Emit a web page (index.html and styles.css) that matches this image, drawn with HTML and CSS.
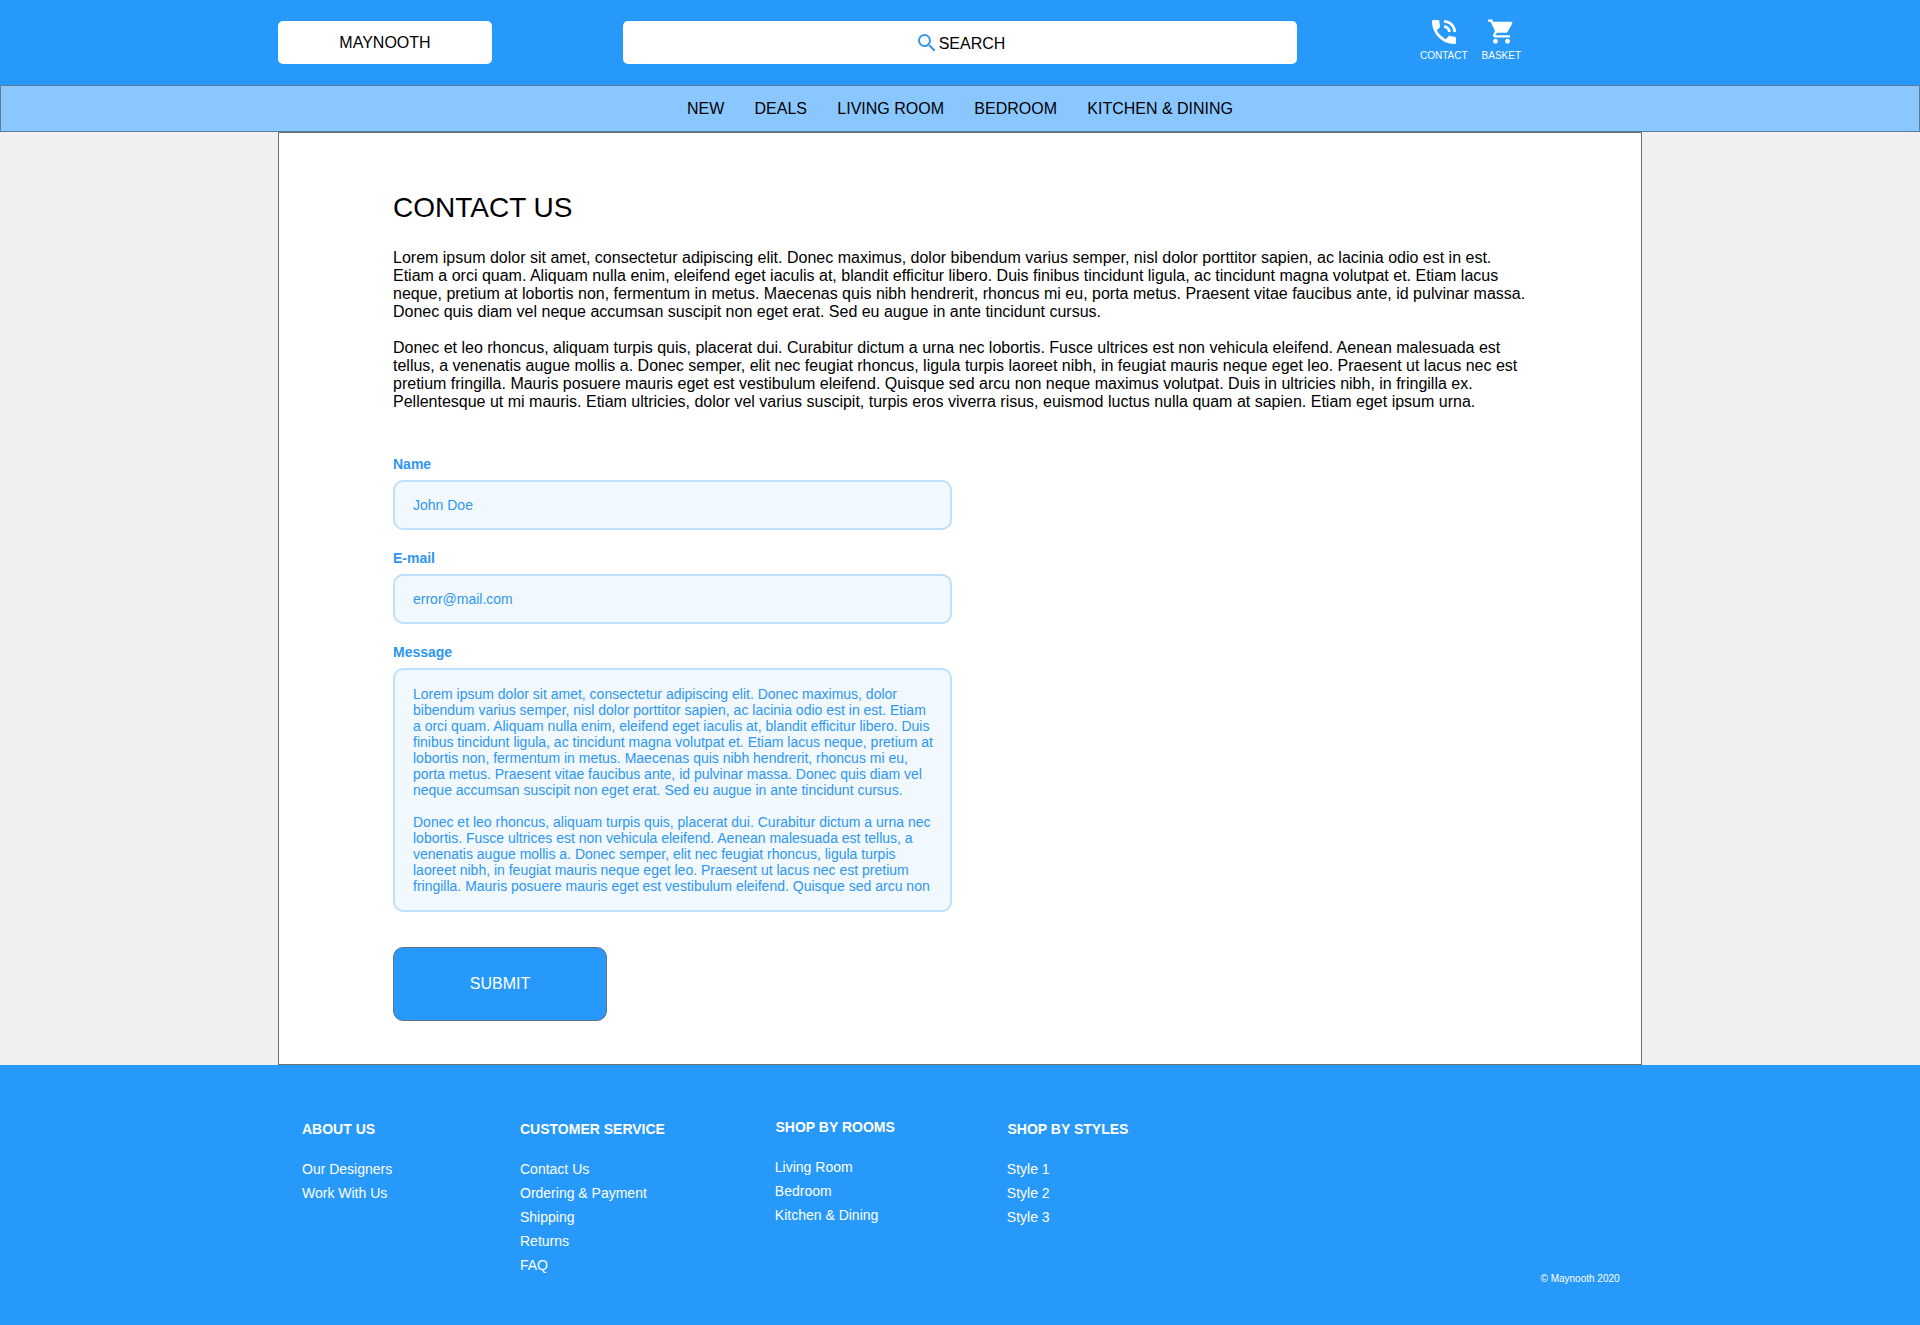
FILE: index.html
```html
<!DOCTYPE html>
<html lang="en">
<head>
<meta charset="utf-8">
<title>Maynooth - Contact Us</title>
<link rel="stylesheet" href="styles.css">
</head>
<body>
<header class="header">
  <a class="logo">MAYNOOTH</a>
  <div class="search">
    <svg width="24" height="24" viewBox="0 0 24 24"><path d="M15.5 14h-.79l-.28-.27A6.471 6.471 0 0 0 16 9.5 6.5 6.5 0 1 0 9.5 16c1.61 0 3.09-.59 4.23-1.57l.27.28v.79l5 4.99L20.49 19l-4.99-5zm-6 0C7.01 14 5 11.99 5 9.5S7.01 5 9.5 5 14 7.01 14 9.5 11.99 14 9.5 14z"/></svg>
    <span>SEARCH</span>
  </div>
  <div class="actions">
    <a class="action">
      <span class="action-icon"><svg width="32" height="32" viewBox="0 0 24 24"><path d="M20 15.5c-1.25 0-2.45-.2-3.57-.57a1.02 1.02 0 0 0-1.02.24l-2.2 2.2a15.045 15.045 0 0 1-6.59-6.59l2.2-2.21c.28-.26.36-.65.25-1C8.7 6.45 8.5 5.25 8.5 4c0-.55-.45-1-1-1H4c-.55 0-1 .45-1 1 0 9.39 7.61 17 17 17 .55 0 1-.45 1-1v-3.5c0-.55-.45-1-1-1zM19 12h2a9 9 0 0 0-9-9v2c3.87 0 7 3.13 7 7zm-4 0h2c0-2.76-2.24-5-5-5v2c1.66 0 3 1.34 3 3z"/></svg></span>
      <span>CONTACT</span>
    </a>
    <a class="action">
      <span class="action-icon"><svg width="29" height="29" viewBox="0 0 24 24"><path d="M7 18c-1.1 0-1.99.9-1.99 2S5.9 22 7 22s2-.9 2-2-.9-2-2-2zM1 2v2h2l3.6 7.59-1.35 2.45c-.16.28-.25.61-.25.96 0 1.1.9 2 2 2h12v-2H7.42c-.14 0-.25-.11-.25-.25l.03-.12.9-1.63h7.45c.75 0 1.41-.41 1.75-1.03l3.58-6.49A1 1 0 0 0 20 4H5.21l-.94-2H1zm16 16c-1.1 0-1.99.9-1.99 2s.89 2 1.99 2 2-.9 2-2-.9-2-2-2z"/></svg></span>
      <span>BASKET</span>
    </a>
  </div>
</header>
<nav class="nav">
  <a>NEW</a><a>DEALS</a><a>LIVING ROOM</a><a>BEDROOM</a><a>KITCHEN &amp; DINING</a>
</nav>
<main class="main">
  <h1 class="title">CONTACT US</h1>
  <p class="copy">Lorem ipsum dolor sit amet, consectetur adipiscing elit. Donec maximus, dolor bibendum varius semper, nisl dolor porttitor sapien, ac lacinia odio est in est.<br>Etiam a orci quam. Aliquam nulla enim, eleifend eget iaculis at, blandit efficitur libero. Duis finibus tincidunt ligula, ac tincidunt magna volutpat et. Etiam lacus<br>neque, pretium at lobortis non, fermentum in metus. Maecenas quis nibh hendrerit, rhoncus mi eu, porta metus. Praesent vitae faucibus ante, id pulvinar massa.<br>Donec quis diam vel neque accumsan suscipit non eget erat. Sed eu augue in ante tincidunt cursus.</p>
  <p class="copy">Donec et leo rhoncus, aliquam turpis quis, placerat dui. Curabitur dictum a urna nec lobortis. Fusce ultrices est non vehicula eleifend. Aenean malesuada est<br>tellus, a venenatis augue mollis a. Donec semper, elit nec feugiat rhoncus, ligula turpis laoreet nibh, in feugiat mauris neque eget leo. Praesent ut lacus nec est<br>pretium fringilla. Mauris posuere mauris eget est vestibulum eleifend. Quisque sed arcu non neque maximus volutpat. Duis in ultricies nibh, in fringilla ex.<br>Pellentesque ut mi mauris. Etiam ultricies, dolor vel varius suscipit, turpis eros viverra risus, euismod luctus nulla quam at sapien. Etiam eget ipsum urna.</p>
  <form class="form">
    <label class="label" for="name">Name</label>
    <input class="field" id="name" type="text" value="John Doe">
    <label class="label" for="email">E-mail</label>
    <input class="field" id="email" type="text" value="error@mail.com">
    <label class="label" for="message">Message</label>
    <textarea class="field message" id="message" spellcheck="false">Lorem ipsum dolor sit amet, consectetur adipiscing elit. Donec maximus, dolor
bibendum varius semper, nisl dolor porttitor sapien, ac lacinia odio est in est. Etiam
a orci quam. Aliquam nulla enim, eleifend eget iaculis at, blandit efficitur libero. Duis
finibus tincidunt ligula, ac tincidunt magna volutpat et. Etiam lacus neque, pretium at
lobortis non, fermentum in metus. Maecenas quis nibh hendrerit, rhoncus mi eu,
porta metus. Praesent vitae faucibus ante, id pulvinar massa. Donec quis diam vel
neque accumsan suscipit non eget erat. Sed eu augue in ante tincidunt cursus.

Donec et leo rhoncus, aliquam turpis quis, placerat dui. Curabitur dictum a urna nec
lobortis. Fusce ultrices est non vehicula eleifend. Aenean malesuada est tellus, a
venenatis augue mollis a. Donec semper, elit nec feugiat rhoncus, ligula turpis
laoreet nibh, in feugiat mauris neque eget leo. Praesent ut lacus nec est pretium
fringilla. Mauris posuere mauris eget est vestibulum eleifend. Quisque sed arcu non</textarea>
    <button class="submit" type="button">SUBMIT</button>
  </form>
</main>
<footer class="footer">
  <div class="col">
    <h2>ABOUT US</h2>
    <ul><li>Our Designers</li><li>Work With Us</li></ul>
  </div>
  <div class="col">
    <h2>CUSTOMER SERVICE</h2>
    <ul><li>Contact Us</li><li>Ordering &amp; Payment</li><li>Shipping</li><li>Returns</li><li>FAQ</li></ul>
  </div>
  <div class="col col-shop col-rooms">
    <h2>SHOP BY ROOMS</h2>
    <ul><li>Living Room</li><li>Bedroom</li><li>Kitchen &amp; Dining</li></ul>
  </div>
  <div class="col col-shop">
    <h2>SHOP BY STYLES</h2>
    <ul><li>Style 1</li><li>Style 2</li><li>Style 3</li></ul>
  </div>
  <small class="copyright">© Maynooth 2020</small>
</footer>
</body>
</html>
```
FILE: styles.css
```css
* { box-sizing: border-box; margin: 0; padding: 0; }

body {
  background: #f0f0f0;
  color: #000;
  font: 16px/18px "Liberation Sans", Arial, sans-serif;
}

.header {
  display: flex;
  align-items: flex-start;
  height: 85px;
  padding: 0 278px;
  background: #2699fb;
}

.logo, .search {
  display: flex;
  align-items: center;
  justify-content: center;
  height: 43px;
  margin-top: 21px;
  border-radius: 5px;
  background: #fff;
}

.logo { width: 214px; }

.search {
  width: 674px;
  margin-left: 131px;
  padding-top: 1px;
}

.search span { padding-top: 1px; }
.search svg { fill: #3797ea; }

.actions {
  display: flex;
  gap: 14px;
  margin: 15px 0 0 123px;
  color: #fff;
  font-size: 10px;
  line-height: 12px;
}

.action {
  display: flex;
  flex-direction: column;
  align-items: center;
}

.action-icon {
  display: flex;
  align-items: center;
  height: 33px;
  margin-bottom: 2px;
}

.action svg { fill: #fff; }

.nav {
  display: flex;
  align-items: center;
  justify-content: center;
  gap: 30.3px;
  height: 47px;
  border: 1px solid #5d7d9c;
  background: #8ac7ff;
}

.main {
  width: 1364px;
  height: 933px;
  margin: 0 auto;
  padding: 59px 0 0 114px;
  border: 1px solid #707070;
  background: #fff;
}

.title {
  margin-bottom: 25px;
  font-size: 28px;
  font-weight: 400;
  line-height: 32px;
}

.copy {
  margin-bottom: 18px;
  white-space: nowrap;
}

.form {
  display: flex;
  flex-direction: column;
  width: 559px;
  padding-top: 27px;
  color: #2e96f0;
  font-size: 14px;
}

.label {
  margin-bottom: 8px;
  font-weight: 700;
  line-height: 16px;
}

.field {
  height: 50px;
  margin-bottom: 20px;
  padding: 0 18px;
  border: 2px solid #bce0fd;
  border-radius: 10px;
  outline: none;
  background: #f1f9ff;
  color: inherit;
  font: 14px/16px "Liberation Sans", Arial, sans-serif;
}

.message {
  height: 244px;
  margin-bottom: 35px;
  padding: 16px 0 0 18px;
  overflow: hidden;
  resize: none;
  white-space: pre;
}

.submit {
  width: 214px;
  height: 74px;
  border: 1px solid #5f7488;
  border-radius: 10px;
  background: #2699fb;
  color: #fff;
  font: 16px/18px "Liberation Sans", Arial, sans-serif;
}

.footer {
  display: grid;
  grid-template-columns: 218px 255.5px 232px 533px auto;
  height: 260px;
  padding: 56px 0 0 302px;
  background: #2699fb;
  color: #fff;
  font-size: 14px;
}

.col h2 {
  margin-bottom: 20px;
  font-size: 14px;
  line-height: 16px;
}

.col ul { list-style: none; }
.col li { line-height: 24px; }
.col-shop ul { margin-left: -0.7px; }
.col-rooms { margin-top: -2px; }

.copyright {
  margin-top: 152px;
  font-size: 10px;
  line-height: 12px;
}
```
